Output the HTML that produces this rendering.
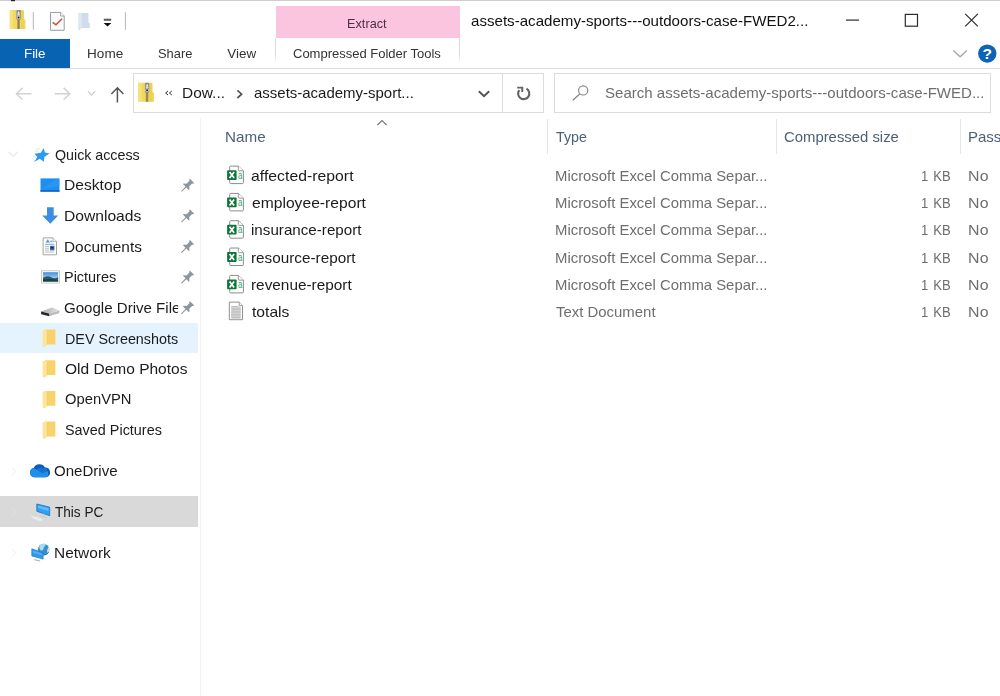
<!DOCTYPE html>
<html lang="en">
<head>
<meta charset="utf-8">
<title>assets-academy-sports---outdoors-case-FWED2</title>
<style>
html,body{margin:0;padding:0;background:#fff;}
body{width:1000px;height:696px;position:relative;overflow:hidden;font-family:"Liberation Sans",sans-serif;}
.t{position:absolute;white-space:nowrap;line-height:1.149;font-family:"Liberation Sans",sans-serif;}
.b{position:absolute;box-sizing:border-box;}
svg{position:absolute;overflow:visible;}
</style>
</head>
<body>
<!-- top edge -->
<div class="b" style="left:0;top:0;width:1000px;height:1px;background:#cfcfcf"></div>
<!-- Extract contextual tab -->
<div class="b" style="left:275.6px;top:6px;width:184px;height:32.4px;background:#fcc5df"></div>
<div class="b" style="left:275.4px;top:38.4px;width:184.4px;height:30px;border-left:1px solid;border-right:1px solid;border-image:linear-gradient(to bottom,#d6d6d6 0%,#dcdcdc 55%,#ffffff 85%) 1"></div>
<!-- File tab -->
<div class="b" style="left:0;top:38.6px;width:70.2px;height:29px;background:#0863b3"></div>
<!-- ribbon bottom line -->
<div class="b" style="left:0;top:68px;width:1000px;height:1px;background:#dcdddd"></div>
<!-- address box -->
<div class="b" style="left:133.4px;top:72.6px;width:410.2px;height:40.2px;border:1px solid #dcdcdc;background:#fff"></div>
<div class="b" style="left:502.4px;top:73px;width:1px;height:39.6px;background:#dcdcdc"></div>
<!-- search box -->
<div class="b" style="left:553.6px;top:72.6px;width:437.6px;height:40.2px;border:1px solid #dcdcdc;background:#fff"></div>
<!-- sidebar highlights -->
<div class="b" style="left:0;top:322.5px;width:198px;height:30.4px;background:#e5f3ff"></div>
<div class="b" style="left:0;top:496.4px;width:198px;height:30.2px;background:#d9d9d9"></div>
<!-- sidebar divider -->
<div class="b" style="left:200px;top:118px;width:1px;height:578px;background:#f2f2f2"></div>
<!-- column separators -->
<div class="b" style="left:546.8px;top:119px;width:1px;height:35px;background:#e6e6e6"></div>
<div class="b" style="left:776.2px;top:119px;width:1px;height:35px;background:#e6e6e6"></div>
<div class="b" style="left:960px;top:119px;width:1px;height:35px;background:#e6e6e6"></div>
<svg width="1000" height="696" viewBox="0 0 1000 696" style="left:0;top:0">
<g transform="translate(9.8,10.1)">
<path d="M0 0H14V8.6L15.7 10.4V18.9H0Z" fill="#f3d860"/>
<rect x="0" y="0" width="3.2" height="18.9" fill="#f6e27a"/>
<rect x="11.2" y="0.6" width="2.8" height="18.3" fill="#efd052"/>
<rect x="7.4" y="8" width="2.7" height="10.9" fill="#a79a5c"/>
<rect x="8.2" y="9" width="1.1" height="9.9" fill="#8f8250"/>
<path d="M7.4 0H10.2Q11 0 11 1V8.4Q11 9.6 10 9.6H7.6Q6.6 9.6 6.6 8.4V1Q6.6 0 7.4 0Z" fill="#8f8f86"/>
<path d="M8.8 1L10 3.6H7.6Z" fill="#ffffff"/>
<rect x="7.5" y="4" width="2.6" height="1.5" fill="#dcdcec"/>
<circle cx="8.8" cy="7.4" r="1.7" fill="#d8d8e2"/>
<circle cx="8.8" cy="7.5" r="1" fill="#1e2030"/>
</g>
<rect x="32.8" y="12.2" width="1" height="17.5" fill="#b5b5b5"/>
<g transform="translate(50,11.9)">
<path d="M0.5 0.5H10.6L14.2 4.1V18.4H0.5Z" fill="#f7fbff" stroke="#9b9b9b" stroke-width="1"/>
<path d="M10.6 0.5V4.1H14.2" fill="#fff" stroke="#9b9b9b" stroke-width="0.9"/>
<path d="M2.6 10.4L6 12.9L12 6.9" fill="none" stroke="#d4522a" stroke-width="1.6"/>
</g>
<g transform="translate(78.6,12.9)">
<path d="M0 0H9.8V9L11.2 10.5V15.2H2.2L1.2 17H0Z" fill="#cfdcee"/>
<rect x="0" y="0" width="3.4" height="15.5" fill="#dde7f4"/>
</g>
<rect x="103.8" y="18.7" width="7.4" height="2.1" fill="#5e5e5e"/><path d="M103.6 22.9H111.4L107.5 26.4Z" fill="#111"/>
<rect x="124.9" y="12.2" width="1" height="17.5" fill="#b5b5b5"/>
<rect x="11" y="0" width="4" height="1.2" fill="#222"/>
<path d="M846 20.1H859" stroke="#2b2b2b" stroke-width="1.2" fill="none"/>
<rect x="905.3" y="14.4" width="12.2" height="11.8" fill="none" stroke="#2b2b2b" stroke-width="1.2"/>
<path d="M965.2 13.9L977.9 26.4M977.9 13.9L965.2 26.4" stroke="#2b2b2b" stroke-width="1.2" fill="none"/>
<path d="M953.3 50.6L960.1 56.8L966.9 50.6" stroke="#a9a9a9" stroke-width="1.4" fill="none"/>
<circle cx="987.3" cy="53.6" r="9.2" fill="#0f63b5"/>
<text x="987.3" y="59.2" text-anchor="middle" font-family="Liberation Sans, sans-serif" font-weight="bold" font-size="15.5" fill="#fff">?</text>
<path d="M31.5 93.8H16.6M22.6 87.9L16.4 93.8L22.6 99.7" stroke="#d2d2d2" stroke-width="1.5" fill="none"/>
<path d="M54.6 93.8H69.4M63.6 87.9L69.8 93.8L63.6 99.7" stroke="#d2d2d2" stroke-width="1.5" fill="none"/>
<path d="M88 91.2L91.6 95L95.2 91.2" stroke="#cfcfcf" stroke-width="1.3" fill="none"/>
<path d="M117.4 102.5V88.2M111.4 94L117.4 87.8L123.4 94" stroke="#555" stroke-width="1.5" fill="none"/>
<g transform="translate(138.3,82.8)">
<path d="M0 0H14V8.6L15.7 10.4V18.9H0Z" fill="#f3d860"/>
<rect x="0" y="0" width="3.2" height="18.9" fill="#f6e27a"/>
<rect x="11.2" y="0.6" width="2.8" height="18.3" fill="#efd052"/>
<rect x="7.4" y="8" width="2.7" height="10.9" fill="#a79a5c"/>
<rect x="8.2" y="9" width="1.1" height="9.9" fill="#8f8250"/>
<path d="M7.4 0H10.2Q11 0 11 1V8.4Q11 9.6 10 9.6H7.6Q6.6 9.6 6.6 8.4V1Q6.6 0 7.4 0Z" fill="#8f8f86"/>
<path d="M8.8 1L10 3.6H7.6Z" fill="#ffffff"/>
<rect x="7.5" y="4" width="2.6" height="1.5" fill="#dcdcec"/>
<circle cx="8.8" cy="7.4" r="1.7" fill="#d8d8e2"/>
<circle cx="8.8" cy="7.5" r="1" fill="#1e2030"/>
</g>
<path d="M168 91L165.6 93L168 95M171.8 91L169.4 93L171.8 95" stroke="#333" stroke-width="1" fill="none"/>
<path d="M237.4 90.4L241.6 94.2L237.4 98" stroke="#555" stroke-width="1.7" fill="none"/>
<path d="M478.8 91.2L484 96.2L489.2 91.2" stroke="#555" stroke-width="2" fill="none"/>
<path d="M526.5 88.7A5.6 5.6 0 1 1 519.3 90.1" stroke="#636363" stroke-width="2.1" fill="none"/>
<path d="M517.2 87.6H522.3V92" stroke="#636363" stroke-width="1.9" fill="none"/>
<circle cx="583.2" cy="90.4" r="4.6" fill="none" stroke="#858585" stroke-width="1.15"/><path d="M580 93.8L572.8 100.2" stroke="#858585" stroke-width="1.25" fill="none"/>
<path d="M377.4 125L382 120.6L386.6 125" stroke="#777" stroke-width="1.1" fill="none"/>
<path d="M8.4 151.8L13.2 156.2L18 151.8" stroke="#ebebeb" stroke-width="1.2" fill="none"/>
<path d="M12 467.3L15.6 471.3L12 475.3" stroke="#f3f3f3" stroke-width="1.1" fill="none"/>
<path d="M12 508L15.6 512L12 516" stroke="#dfdfdf" stroke-width="1.1" fill="none"/>
<path d="M12 548.8L15.6 552.8L12 556.8" stroke="#f3f3f3" stroke-width="1.1" fill="none"/>
<path d="M43.8 147.9L44.9 152.6L49.5 153.5L44.5 156.7L43.7 161.7L39.8 158.8L34.2 161.9L37.3 157L34.5 153.7L40.8 152.7Z" fill="#2a9af3"/>
<path d="M36.2 149.4L39.8 148.7M35 151.6L38 151.1M33 156.6L35.6 156.2" stroke="#d5dde6" stroke-width="0.8" fill="none"/>
<rect x="40.5" y="178.4" width="19" height="13.3" fill="#1d8ff0"/><rect x="40.5" y="190" width="19" height="1.7" fill="#1769bd"/><path d="M42 189L56 179.4H59.5V186Z" fill="#3aa0f6" opacity="0.45"/>
<path d="M47 207.2H53.7V215.6H58.2L50.3 223.8L42.2 215.6H47Z" fill="#3b8ee4"/>
<g transform="translate(42.6,237.4)"><path d="M0.5 0.5H10.4L13.9 4V17.4H0.5Z" fill="#fdfdfd" stroke="#a5a5a5" stroke-width="1"/><path d="M10.4 0.5V4H13.9" fill="#fff" stroke="#a5a5a5" stroke-width="0.8"/><path d="M3 5.2L5.2 1.8L7.2 5.2Z" fill="#4f8fd8"/><rect x="7.6" y="3.2" width="2.4" height="1.6" fill="#7ab0e8"/><rect x="2.4" y="6.4" width="9.2" height="1" fill="#7fa9d8"/><rect x="2.4" y="8.6" width="4" height="0.9" fill="#b9b9b9"/><rect x="2.4" y="10.4" width="4" height="0.9" fill="#b9b9b9"/><rect x="2.4" y="12.2" width="4" height="0.9" fill="#b9b9b9"/><rect x="2.4" y="14.2" width="9.2" height="0.9" fill="#b9b9b9"/><rect x="7.4" y="8.4" width="4.4" height="4.6" fill="#3c6ea8"/><rect x="8.2" y="9.6" width="2.8" height="1.6" fill="#1c2e44"/></g>
<g transform="translate(41.2,270.4)"><rect x="0.4" y="0.4" width="17.9" height="12.2" fill="#fff" stroke="#b8bcc0" stroke-width="0.8"/><rect x="1.8" y="1.8" width="15.1" height="9.4" fill="url(#picg)"/><path d="M1.8 7.4Q6 4.6 10 6.8T16.9 6.6V11.2H1.8Z" fill="#2d5a5e"/><path d="M1.8 9.4Q7 7.6 16.9 9.6V11.2H1.8Z" fill="#1d3f46"/></g>
<defs><linearGradient id="picg" x1="0" y1="0" x2="0" y2="1"><stop offset="0" stop-color="#3f8fe0"/><stop offset="0.6" stop-color="#9cc9ee"/><stop offset="1" stop-color="#d6e9f6"/></linearGradient><linearGradient id="drvg" x1="0" y1="0" x2="1" y2="0"><stop offset="0" stop-color="#a9a9a9"/><stop offset="1" stop-color="#e6e6e6"/></linearGradient></defs>
<g transform="translate(40.5,307.6)"><path d="M0.4 4L11.6 0L19.2 2.8L8.6 6Z" fill="url(#drvg)"/><path d="M8.6 6L19.2 2.8L18.6 5.6L8.8 8.6Z" fill="#bdbdbd"/><path d="M0.4 4L8.6 6L8.8 8.6L0.7 6.6Z" fill="#262626"/></g>
<g transform="translate(42.6,329.6)">
<path d="M2.2 0H12.8V14.9H4.6Z" fill="#f8d36b"/>
<path d="M0 0.7H4.6V15.2L2.2 17.3H0.9L0 16.8Z" fill="#fce59a"/>
<path d="M4.6 1.3V15" stroke="#f2c85a" stroke-width="0.6" fill="none"/>
</g>
<g transform="translate(42.6,360.2)">
<path d="M2.2 0H12.8V14.9H4.6Z" fill="#f8d36b"/>
<path d="M0 0.7H4.6V15.2L2.2 17.3H0.9L0 16.8Z" fill="#fce59a"/>
<path d="M4.6 1.3V15" stroke="#f2c85a" stroke-width="0.6" fill="none"/>
</g>
<g transform="translate(42.6,390.9)">
<path d="M2.2 0H12.8V14.9H4.6Z" fill="#f8d36b"/>
<path d="M0 0.7H4.6V15.2L2.2 17.3H0.9L0 16.8Z" fill="#fce59a"/>
<path d="M4.6 1.3V15" stroke="#f2c85a" stroke-width="0.6" fill="none"/>
</g>
<g transform="translate(42.6,421.5)">
<path d="M2.2 0H12.8V14.9H4.6Z" fill="#f8d36b"/>
<path d="M0 0.7H4.6V15.2L2.2 17.3H0.9L0 16.8Z" fill="#fce59a"/>
<path d="M4.6 1.3V15" stroke="#f2c85a" stroke-width="0.6" fill="none"/>
</g>
<g transform="translate(186.35,186.55) rotate(45)" fill="#8d959d" stroke="none">
<path d="M-2.9 -8H2.9V-7L1.9 -6.2V-2.2L4.2 -0.2V0.6H0.6L0.5 7H-0.5L-0.6 0.6H-4.2V-0.2L-1.9 -2.2V-6.2L-2.9 -7Z"/>
</g>
<g transform="translate(186.35,217.15) rotate(45)" fill="#8d959d" stroke="none">
<path d="M-2.9 -8H2.9V-7L1.9 -6.2V-2.2L4.2 -0.2V0.6H0.6L0.5 7H-0.5L-0.6 0.6H-4.2V-0.2L-1.9 -2.2V-6.2L-2.9 -7Z"/>
</g>
<g transform="translate(186.35,247.75) rotate(45)" fill="#8d959d" stroke="none">
<path d="M-2.9 -8H2.9V-7L1.9 -6.2V-2.2L4.2 -0.2V0.6H0.6L0.5 7H-0.5L-0.6 0.6H-4.2V-0.2L-1.9 -2.2V-6.2L-2.9 -7Z"/>
</g>
<g transform="translate(186.35,278.35) rotate(45)" fill="#8d959d" stroke="none">
<path d="M-2.9 -8H2.9V-7L1.9 -6.2V-2.2L4.2 -0.2V0.6H0.6L0.5 7H-0.5L-0.6 0.6H-4.2V-0.2L-1.9 -2.2V-6.2L-2.9 -7Z"/>
</g>
<g transform="translate(186.35,308.95) rotate(45)" fill="#8d959d" stroke="none">
<path d="M-2.9 -8H2.9V-7L1.9 -6.2V-2.2L4.2 -0.2V0.6H0.6L0.5 7H-0.5L-0.6 0.6H-4.2V-0.2L-1.9 -2.2V-6.2L-2.9 -7Z"/>
</g>
<g transform="translate(29.3,464.1)"><path d="M5.2 13.1A4.6 4.6 0 0 1 4.4 4 6.2 6.2 0 0 1 15.6 3.4 4.9 4.9 0 0 1 16.8 13.1Z" fill="#0c5cb8"/><path d="M5.2 13.1A4.6 4.6 0 0 1 3 4.6Q5 4 7 5.2L13.4 9.2L17.8 6.6A4 4 0 0 1 16.8 13.1Z" fill="#1f8fe8"/><path d="M7 5.2L13.4 9.2L17.8 6.6Q18.6 5.4 16.6 3.9Q14.6 3.4 13.2 4.4Q10 2 7 5.2Z" fill="#1672cf"/></g>
<path d="M36.8 504L49.7 507.2V515.7L36.8 511.3Z" fill="#2ea2f2" stroke="#1d6fbe" stroke-width="0.8"/>
<path d="M38 505.6L48.6 508.3V511L38 508Z" fill="#6cc2fa" opacity="0.8"/>
<path d="M43.6 513.6V516.2M40.4 516L46.6 517.4" stroke="#c4ccd6" stroke-width="1" fill="none"/>
<path d="M31.2 516.6L41 518.6M32.4 518L42.6 520M36 519.6L41 520.6" stroke="#eef2f6" stroke-width="0.9" fill="none"/>
<circle cx="43.6" cy="549.6" r="5.8" fill="#3a8fc6"/>
<path d="M39.4 545.6A5.8 5.8 0 0 1 46.4 544.6Q44 546 43.6 548.4T40.6 550.6Q38.6 548.6 39.4 545.6Z" fill="#a9dcf2"/>
<path d="M48 546Q50.6 550 47.6 553.8Q46.4 551 47.6 549T48 546Z" fill="#cfeaf6"/>
<path d="M43.6 555.4A5.8 5.8 0 0 0 49 551.6Q47 554 43.6 555.4Z" fill="#1c5c86"/>
<path d="M31.8 548.8L43.1 552.8V559.1L31.8 555.9Z" fill="#2c9cf0" stroke="#2277c8" stroke-width="0.7"/>
<path d="M32.8 550.4L42.2 553.7V555.6L32.8 552.6Z" fill="#5cb8f8" opacity="0.8"/>
<path d="M34 559.6L40.2 561" stroke="#9aa6b2" stroke-width="0.9" fill="none"/>
<g transform="translate(227.1,165.6)">
<path d="M3.6 0.5H11.2L16.3 5.2V17Q16.3 18 15.3 18H3.6Q2.6 18 2.6 17V1.5Q2.6 0.5 3.6 0.5Z" fill="#fff" stroke="#8c8c8c" stroke-width="1"/>
<path d="M11.2 0.5V4.2Q11.2 5.2 12.2 5.2H16.3" fill="#fff" stroke="#8c8c8c" stroke-width="0.9"/>
<rect x="0" y="4.6" width="9.5" height="9.8" rx="0.8" fill="#10743d"/>
<path d="M2.5 6.5L7 12.5M7 6.5L2.5 12.5" stroke="#fff" stroke-width="1.7" fill="none"/>
<text x="10.9" y="13" font-family="Liberation Sans, sans-serif" font-size="10.4" fill="#2aa565" textLength="4.3" lengthAdjust="spacingAndGlyphs">a</text>
</g>
<g transform="translate(227.1,192.9)">
<path d="M3.6 0.5H11.2L16.3 5.2V17Q16.3 18 15.3 18H3.6Q2.6 18 2.6 17V1.5Q2.6 0.5 3.6 0.5Z" fill="#fff" stroke="#8c8c8c" stroke-width="1"/>
<path d="M11.2 0.5V4.2Q11.2 5.2 12.2 5.2H16.3" fill="#fff" stroke="#8c8c8c" stroke-width="0.9"/>
<rect x="0" y="4.6" width="9.5" height="9.8" rx="0.8" fill="#10743d"/>
<path d="M2.5 6.5L7 12.5M7 6.5L2.5 12.5" stroke="#fff" stroke-width="1.7" fill="none"/>
<text x="10.9" y="13" font-family="Liberation Sans, sans-serif" font-size="10.4" fill="#2aa565" textLength="4.3" lengthAdjust="spacingAndGlyphs">a</text>
</g>
<g transform="translate(227.1,220.2)">
<path d="M3.6 0.5H11.2L16.3 5.2V17Q16.3 18 15.3 18H3.6Q2.6 18 2.6 17V1.5Q2.6 0.5 3.6 0.5Z" fill="#fff" stroke="#8c8c8c" stroke-width="1"/>
<path d="M11.2 0.5V4.2Q11.2 5.2 12.2 5.2H16.3" fill="#fff" stroke="#8c8c8c" stroke-width="0.9"/>
<rect x="0" y="4.6" width="9.5" height="9.8" rx="0.8" fill="#10743d"/>
<path d="M2.5 6.5L7 12.5M7 6.5L2.5 12.5" stroke="#fff" stroke-width="1.7" fill="none"/>
<text x="10.9" y="13" font-family="Liberation Sans, sans-serif" font-size="10.4" fill="#2aa565" textLength="4.3" lengthAdjust="spacingAndGlyphs">a</text>
</g>
<g transform="translate(227.1,247.5)">
<path d="M3.6 0.5H11.2L16.3 5.2V17Q16.3 18 15.3 18H3.6Q2.6 18 2.6 17V1.5Q2.6 0.5 3.6 0.5Z" fill="#fff" stroke="#8c8c8c" stroke-width="1"/>
<path d="M11.2 0.5V4.2Q11.2 5.2 12.2 5.2H16.3" fill="#fff" stroke="#8c8c8c" stroke-width="0.9"/>
<rect x="0" y="4.6" width="9.5" height="9.8" rx="0.8" fill="#10743d"/>
<path d="M2.5 6.5L7 12.5M7 6.5L2.5 12.5" stroke="#fff" stroke-width="1.7" fill="none"/>
<text x="10.9" y="13" font-family="Liberation Sans, sans-serif" font-size="10.4" fill="#2aa565" textLength="4.3" lengthAdjust="spacingAndGlyphs">a</text>
</g>
<g transform="translate(227.1,274.9)">
<path d="M3.6 0.5H11.2L16.3 5.2V17Q16.3 18 15.3 18H3.6Q2.6 18 2.6 17V1.5Q2.6 0.5 3.6 0.5Z" fill="#fff" stroke="#8c8c8c" stroke-width="1"/>
<path d="M11.2 0.5V4.2Q11.2 5.2 12.2 5.2H16.3" fill="#fff" stroke="#8c8c8c" stroke-width="0.9"/>
<rect x="0" y="4.6" width="9.5" height="9.8" rx="0.8" fill="#10743d"/>
<path d="M2.5 6.5L7 12.5M7 6.5L2.5 12.5" stroke="#fff" stroke-width="1.7" fill="none"/>
<text x="10.9" y="13" font-family="Liberation Sans, sans-serif" font-size="10.4" fill="#2aa565" textLength="4.3" lengthAdjust="spacingAndGlyphs">a</text>
</g>
<g transform="translate(228.8,301.6)">
<path d="M0.5 0.5H10.4L13.7 3.8V18.1H0.5Z" fill="#fff" stroke="#8f8f8f" stroke-width="1"/>
<path d="M10.4 0.5V3.8H13.7" fill="#fff" stroke="#8f8f8f" stroke-width="0.9"/>
<rect x="2.2" y="4.2" width="9.8" height="12.6" fill="#dcdcdc"/>
<rect x="2.6" y="4.60" width="6.4" height="0.8" fill="#b9b9b9"/><rect x="2.6" y="6.15" width="9.2" height="0.8" fill="#b9b9b9"/><rect x="2.6" y="7.70" width="9.2" height="0.8" fill="#b9b9b9"/><rect x="2.6" y="9.25" width="9.2" height="0.8" fill="#b9b9b9"/><rect x="2.6" y="10.80" width="9.2" height="0.8" fill="#b9b9b9"/><rect x="2.6" y="12.35" width="9.2" height="0.8" fill="#b9b9b9"/><rect x="2.6" y="13.90" width="9.2" height="0.8" fill="#b9b9b9"/><rect x="2.6" y="15.45" width="9.2" height="0.8" fill="#b9b9b9"/><rect x="2.6" y="17.00" width="9.2" height="0.8" fill="#b9b9b9"/>
</g>
</svg>
<div id="txt" style="position:absolute;left:0;top:0;width:1000px;height:696px;will-change:transform">
<span class="t" style="left:471.05px;top:12.00px;font-size:15.0px;color:#111;letter-spacing:0.000px;transform:scaleX(1.0068);transform-origin:0 0">assets-academy-sports---outdoors-case-FWED2...</span>
<span class="t" style="left:347.09px;top:16.00px;font-size:13.4px;color:#4d2f45;letter-spacing:0.024px;transform:scaleX(0.9472);transform-origin:0 0">Extract</span>
<span class="t" style="left:293.32px;top:46.00px;font-size:13.4px;color:#333;letter-spacing:-0.021px;transform:scaleX(0.9735);transform-origin:0 0">Compressed Folder Tools</span>
<span class="t" style="left:24.10px;top:46.00px;font-size:13.4px;color:#fff;letter-spacing:-0.075px">File</span>
<span class="t" style="left:87.10px;top:46.00px;font-size:13.4px;color:#333;letter-spacing:0.045px;transform:scaleX(1.0102);transform-origin:0 0">Home</span>
<span class="t" style="left:158.01px;top:46.00px;font-size:13.4px;color:#333;letter-spacing:0.012px;transform:scaleX(0.9623);transform-origin:0 0">Share</span>
<span class="t" style="left:227.28px;top:46.00px;font-size:13.4px;color:#333;letter-spacing:0.000px">View</span>
<span class="t" style="left:181.98px;top:84.00px;font-size:15.0px;color:#1b1b1b;letter-spacing:0.017px;transform:scaleX(1.0293);transform-origin:0 0">Dow...</span>
<span class="t" style="left:253.55px;top:84.00px;font-size:15.0px;color:#1b1b1b;letter-spacing:0.000px;transform:scaleX(0.9984);transform-origin:0 0">assets-academy-sport...</span>
<span class="t" style="left:604.82px;top:84.00px;font-size:15.0px;color:#6e6e6e;letter-spacing:0.000px;transform:scaleX(1.0027);transform-origin:0 0">Search assets-academy-sports---outdoors-case-FWED...</span>
<span class="t" style="left:225.25px;top:128.00px;font-size:15.0px;color:#4c607a;letter-spacing:0.059px;transform:scaleX(1.0144);transform-origin:0 0">Name</span>
<span class="t" style="left:555.93px;top:128.00px;font-size:15.0px;color:#4c607a;letter-spacing:0.000px;transform:scaleX(0.9524);transform-origin:0 0">Type</span>
<span class="t" style="left:784.48px;top:128.00px;font-size:15.0px;color:#4c607a;letter-spacing:0.000px;transform:scaleX(0.9913);transform-origin:0 0">Compressed size</span>
<span class="t" style="left:968.41px;top:128.00px;font-size:15.0px;color:#4c607a;letter-spacing:-0.022px;transform:scaleX(1.0023);transform-origin:0 0">Password</span>
<span class="t" style="left:54.52px;top:146.00px;font-size:15.0px;color:#1b1b1b;letter-spacing:-0.017px;transform:scaleX(0.9511);transform-origin:0 0">Quick access</span>
<span class="t" style="left:64.26px;top:176.00px;font-size:15.0px;color:#1b1b1b;letter-spacing:0.022px;transform:scaleX(1.0393);transform-origin:0 0">Desktop</span>
<span class="t" style="left:64.26px;top:207.00px;font-size:15.0px;color:#1b1b1b;letter-spacing:-0.011px;transform:scaleX(1.0428);transform-origin:0 0">Downloads</span>
<span class="t" style="left:64.41px;top:238.00px;font-size:15.0px;color:#1b1b1b;letter-spacing:0.016px;transform:scaleX(1.0249);transform-origin:0 0">Documents</span>
<span class="t" style="left:64.41px;top:268.00px;font-size:15.0px;color:#1b1b1b;letter-spacing:-0.013px;transform:scaleX(0.9638);transform-origin:0 0">Pictures</span>
<span class="t" style="left:64.48px;top:299.00px;font-size:15.0px;color:#1b1b1b;letter-spacing:-0.000px;transform:scaleX(1.0044);transform-origin:0 0;clip-path:inset(0 2.30px 0 0)">Google Drive File</span>
<span class="t" style="left:64.56px;top:330.00px;font-size:15.0px;color:#1b1b1b;letter-spacing:-0.007px;transform:scaleX(0.9559);transform-origin:0 0">DEV Screenshots</span>
<span class="t" style="left:64.67px;top:360.00px;font-size:15.0px;color:#1b1b1b;letter-spacing:0.003px;transform:scaleX(1.0337);transform-origin:0 0">Old Demo Photos</span>
<span class="t" style="left:64.67px;top:390.00px;font-size:15.0px;color:#1b1b1b;letter-spacing:0.008px;transform:scaleX(0.984);transform-origin:0 0">OpenVPN</span>
<span class="t" style="left:64.67px;top:421.00px;font-size:15.0px;color:#1b1b1b;letter-spacing:0.004px;transform:scaleX(0.9594);transform-origin:0 0">Saved Pictures</span>
<span class="t" style="left:53.93px;top:462.00px;font-size:15.0px;color:#1b1b1b;letter-spacing:0.019px;transform:scaleX(1.0016);transform-origin:0 0">OneDrive</span>
<span class="t" style="left:54.74px;top:503.00px;font-size:15.0px;color:#1b1b1b;letter-spacing:-0.008px;transform:scaleX(0.9053);transform-origin:0 0">This PC</span>
<span class="t" style="left:53.98px;top:544.00px;font-size:15.0px;color:#1b1b1b;letter-spacing:0.029px;transform:scaleX(1.0288);transform-origin:0 0">Network</span>
<span class="t" style="left:250.88px;top:167.00px;font-size:15.0px;color:#1b1b1b;letter-spacing:0.024px;transform:scaleX(1.0501);transform-origin:0 0">affected-report</span>
<span class="t" style="left:555.26px;top:167.00px;font-size:15.0px;color:#6e6e6e;letter-spacing:0.002px;transform:scaleX(0.9915);transform-origin:0 0">Microsoft Excel Comma Separ...</span>
<span class="t" style="left:921.04px;top:167.00px;font-size:15.0px;color:#6e6e6e;word-spacing:1.552px;transform:scaleX(0.87);transform-origin:0 0">1 KB</span>
<span class="t" style="left:968.31px;top:167.00px;font-size:15.0px;color:#6e6e6e;letter-spacing:0.212px;transform:scaleX(1.06);transform-origin:0 0">No</span>
<span class="t" style="left:251.55px;top:194.00px;font-size:15.0px;color:#1b1b1b;letter-spacing:0.012px;transform:scaleX(1.0418);transform-origin:0 0">employee-report</span>
<span class="t" style="left:555.26px;top:194.00px;font-size:15.0px;color:#6e6e6e;letter-spacing:0.002px;transform:scaleX(0.9915);transform-origin:0 0">Microsoft Excel Comma Separ...</span>
<span class="t" style="left:921.04px;top:194.00px;font-size:15.0px;color:#6e6e6e;word-spacing:1.552px;transform:scaleX(0.87);transform-origin:0 0">1 KB</span>
<span class="t" style="left:968.31px;top:194.00px;font-size:15.0px;color:#6e6e6e;letter-spacing:0.212px;transform:scaleX(1.06);transform-origin:0 0">No</span>
<span class="t" style="left:251.45px;top:221.00px;font-size:15.0px;color:#1b1b1b;letter-spacing:0.006px;transform:scaleX(1.0106);transform-origin:0 0">insurance-report</span>
<span class="t" style="left:555.26px;top:221.00px;font-size:15.0px;color:#6e6e6e;letter-spacing:0.002px;transform:scaleX(0.9915);transform-origin:0 0">Microsoft Excel Comma Separ...</span>
<span class="t" style="left:921.04px;top:221.00px;font-size:15.0px;color:#6e6e6e;word-spacing:1.552px;transform:scaleX(0.87);transform-origin:0 0">1 KB</span>
<span class="t" style="left:968.31px;top:221.00px;font-size:15.0px;color:#6e6e6e;letter-spacing:0.212px;transform:scaleX(1.06);transform-origin:0 0">No</span>
<span class="t" style="left:251.45px;top:249.00px;font-size:15.0px;color:#1b1b1b;letter-spacing:0.000px;transform:scaleX(1.0197);transform-origin:0 0">resource-report</span>
<span class="t" style="left:555.26px;top:249.00px;font-size:15.0px;color:#6e6e6e;letter-spacing:0.002px;transform:scaleX(0.9915);transform-origin:0 0">Microsoft Excel Comma Separ...</span>
<span class="t" style="left:921.04px;top:249.00px;font-size:15.0px;color:#6e6e6e;word-spacing:1.552px;transform:scaleX(0.87);transform-origin:0 0">1 KB</span>
<span class="t" style="left:968.31px;top:249.00px;font-size:15.0px;color:#6e6e6e;letter-spacing:0.212px;transform:scaleX(1.06);transform-origin:0 0">No</span>
<span class="t" style="left:251.45px;top:276.00px;font-size:15.0px;color:#1b1b1b;letter-spacing:0.000px;transform:scaleX(1.0231);transform-origin:0 0">revenue-report</span>
<span class="t" style="left:555.26px;top:276.00px;font-size:15.0px;color:#6e6e6e;letter-spacing:0.002px;transform:scaleX(0.9915);transform-origin:0 0">Microsoft Excel Comma Separ...</span>
<span class="t" style="left:921.04px;top:276.00px;font-size:15.0px;color:#6e6e6e;word-spacing:1.552px;transform:scaleX(0.87);transform-origin:0 0">1 KB</span>
<span class="t" style="left:968.31px;top:276.00px;font-size:15.0px;color:#6e6e6e;letter-spacing:0.212px;transform:scaleX(1.06);transform-origin:0 0">No</span>
<span class="t" style="left:252.12px;top:303.00px;font-size:15.0px;color:#1b1b1b;letter-spacing:0.000px;transform:scaleX(1.0429);transform-origin:0 0">totals</span>
<span class="t" style="left:555.93px;top:303.00px;font-size:15.0px;color:#6e6e6e;letter-spacing:-0.004px;transform:scaleX(0.9955);transform-origin:0 0">Text Document</span>
<span class="t" style="left:921.04px;top:303.00px;font-size:15.0px;color:#6e6e6e;word-spacing:1.552px;transform:scaleX(0.87);transform-origin:0 0">1 KB</span>
<span class="t" style="left:968.31px;top:303.00px;font-size:15.0px;color:#6e6e6e;letter-spacing:0.212px;transform:scaleX(1.06);transform-origin:0 0">No</span>
</div>
</body>
</html>
